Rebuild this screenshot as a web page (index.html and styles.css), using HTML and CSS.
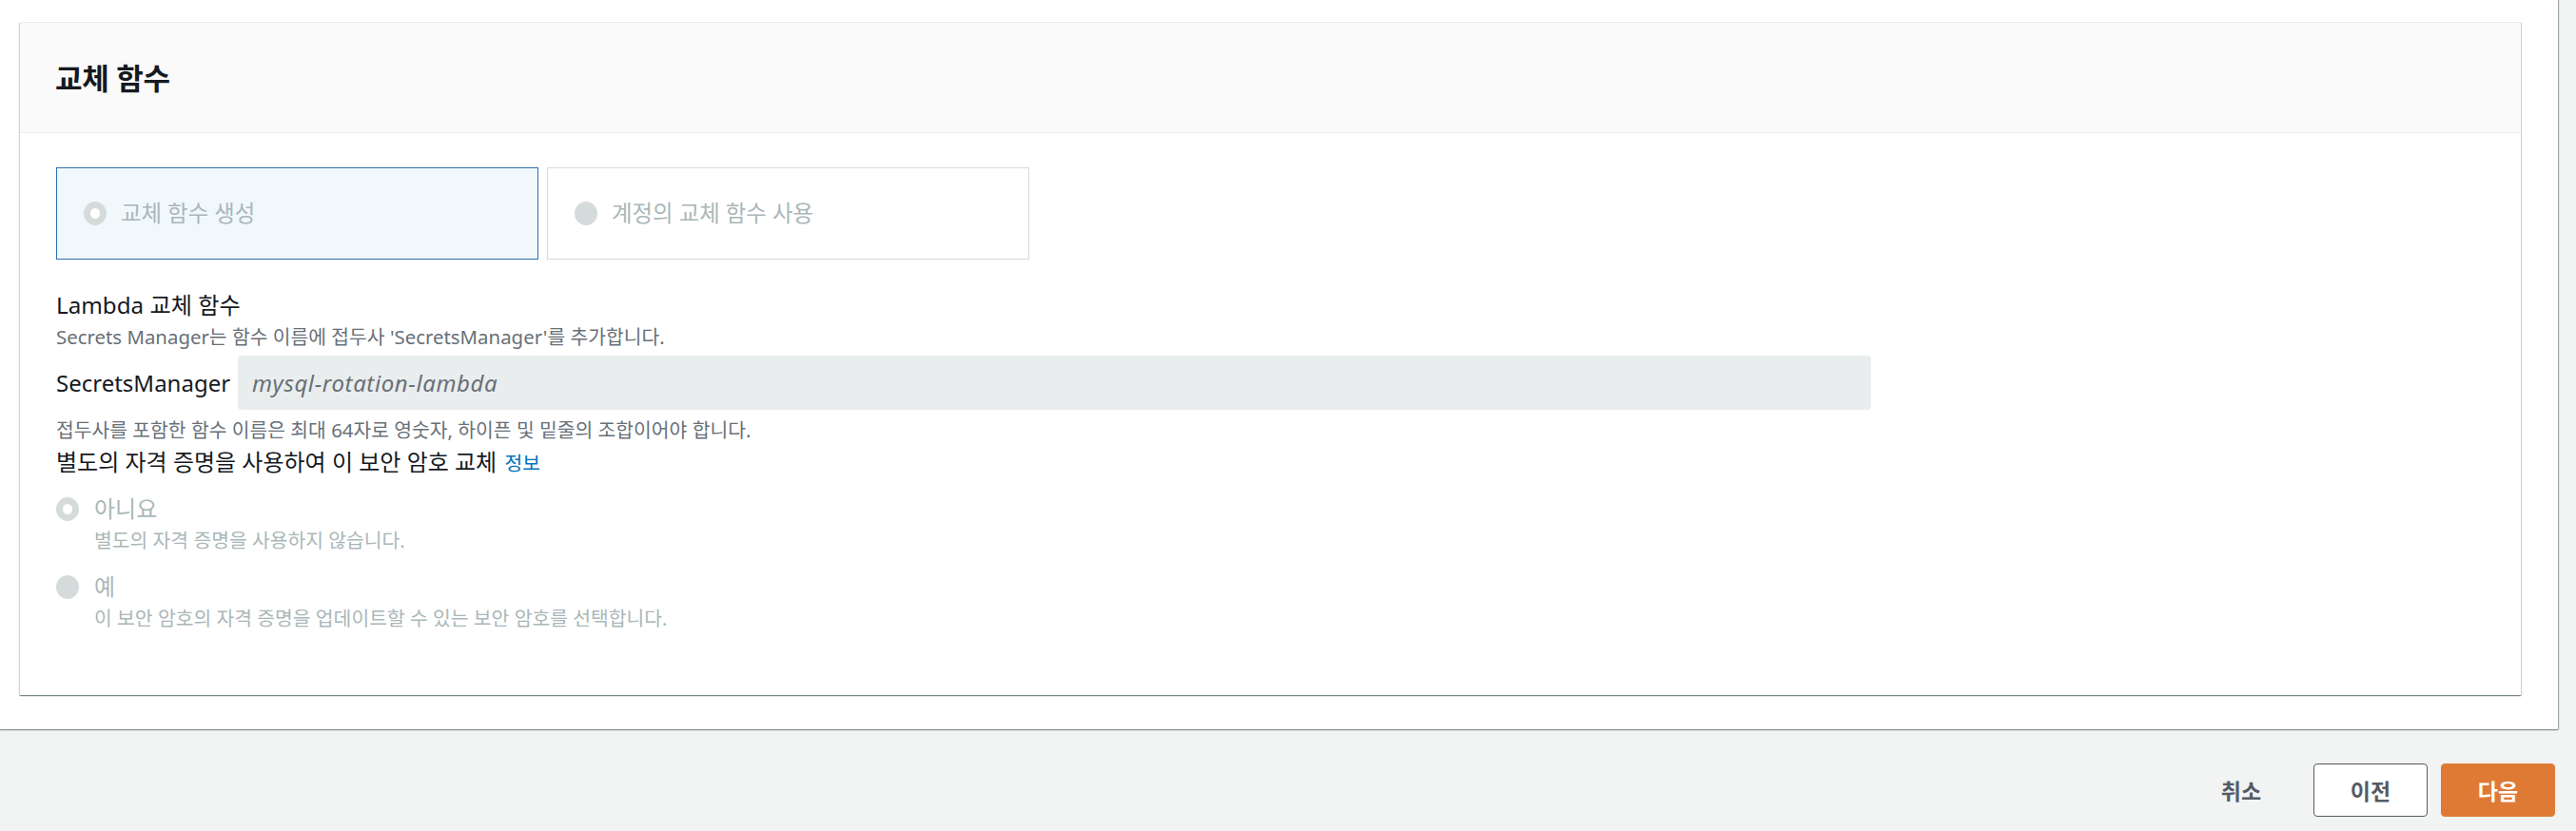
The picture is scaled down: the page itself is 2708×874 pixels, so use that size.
FILE: index.html
```html
<!DOCTYPE html>
<html lang="ko">
<head>
<meta charset="utf-8">
<title>교체 함수</title>
<link rel="stylesheet" href="styles.css">
</head>
<body>
<div class="main">
  <section class="card">
    <header class="card-header">
      <h2 class="card-title">교체 함수</h2>
    </header>
    <div class="card-body">
      <div class="tiles">
        <div class="tile tile-selected">
          <span class="radio radio-checked"></span>
          <span class="tile-label">교체 함수 생성</span>
        </div>
        <div class="tile">
          <span class="radio"></span>
          <span class="tile-label">계정의 교체 함수 사용</span>
        </div>
      </div>

      <div class="field-label">Lambda 교체 함수</div>
      <div class="field-desc">Secrets Manager는 함수 이름에 접두사 'SecretsManager'를 추가합니다.</div>
      <div class="input-row">
        <span class="prefix">SecretsManager</span>
        <div class="input"><span class="placeholder">mysql-rotation-lambda</span></div>
      </div>
      <div class="field-hint">접두사를 포함한 함수 이름은 최대 64자로 영숫자, 하이픈 및 밑줄의 조합이어야 합니다.</div>

      <div class="question">별도의 자격 증명을 사용하여 이 보안 암호 교체 <a class="info">정보</a></div>

      <div class="option first">
        <div class="option-row">
          <span class="radio radio-checked"></span>
          <span class="option-label">아니요</span>
        </div>
        <div class="option-desc">별도의 자격 증명을 사용하지 않습니다.</div>
      </div>
      <div class="option second">
        <div class="option-row">
          <span class="radio"></span>
          <span class="option-label">예</span>
        </div>
        <div class="option-desc">이 보안 암호의 자격 증명을 업데이트할 수 있는 보안 암호를 선택합니다.</div>
      </div>
    </div>
  </section>
</div>
<footer class="footer">
  <button class="btn btn-link">취소</button>
  <button class="btn btn-normal">이전</button>
  <button class="btn btn-primary">다음</button>
</footer>
</body>
</html>
```

FILE: styles.css
```css
* { box-sizing: border-box; }

html, body {
  margin: 0;
  padding: 0;
}

body {
  background: #f2f3f3;
  font-family: "Noto Sans", "Noto Sans CJK KR", sans-serif;
  color: #16191f;
  width: 2708px;
  height: 874px;
  overflow: hidden;
}

.main {
  width: 2689px;
  height: 767px;
  background: #ffffff;
  padding: 23px 39px 0 21px;
  box-shadow: 0 1px 1px 0 rgba(0, 28, 36, 0.45), 1px 0 1px 0 rgba(0, 28, 36, 0.3);
}

.card {
  background: #ffffff;
  border-top: 1px solid #eaeded;
  height: 708px;
  box-shadow: 0 1px 1px 0 rgba(0, 28, 36, 0.35), 1px 1px 1px 0 rgba(0, 28, 36, 0.15), -1px 1px 1px 0 rgba(0, 28, 36, 0.15);
}

.card-header {
  height: 116px;
  background: #fafafa;
  border-bottom: 1px solid #eaeded;
  display: flex;
  align-items: center;
  padding-left: 37px;
}

.card-title {
  margin: 0;
  font-size: 31px;
  font-weight: 700;
  line-height: 38px;
  color: #16191f;
  letter-spacing: -0.3px;
}

.card-body {
  padding: 36px 0 0 38px;
}

.tiles {
  display: flex;
  gap: 9px;
}

.tile {
  width: 507px;
  height: 97px;
  border: 1px solid #d5dbdb;
  background: #ffffff;
  display: flex;
  align-items: center;
  padding-left: 28px;
  gap: 15px;
}

.tile-selected {
  border-color: #2e6fb0;
  background: #f1f8fc;
}

.tile-label {
  font-size: 23.4px;
  color: #aab7b8;
  line-height: 30px;
  position: relative;
  top: -1px;
}

.radio {
  width: 24px;
  height: 25px;
  border-radius: 50%;
  background: #d5dbdb;
  flex: none;
  display: inline-block;
}

.radio-checked {
  background: #ffffff;
  border: 7px solid #d5dbdb;
}

.field-label {
  margin-top: 33px;
  font-size: 24.2px;
  line-height: 30px;
  color: #16191f;
}

.field-desc {
  margin-top: 4px;
  font-size: 20.4px;
  line-height: 28px;
  color: #687078;
}

.input-row {
  margin-top: 6px;
  display: flex;
  align-items: center;
  gap: 10px;
}

.prefix {
  font-size: 24px;
  color: #16191f;
  width: 181px;
  flex: none;
  white-space: nowrap;
}

.input {
  width: 1717px;
  height: 57px;
  background: #eaeded;
  border-radius: 4px;
  display: flex;
  align-items: center;
  padding-left: 15px;
}

.placeholder {
  font-size: 24px;
  font-style: italic;
  letter-spacing: 0.6px;
  color: #687078;
}

.field-hint {
  margin-top: 7px;
  font-size: 20.4px;
  line-height: 28px;
  color: #687078;
}

.question {
  margin-top: 5px;
  font-size: 24px;
  line-height: 30px;
  color: #16191f;
}

.info {
  font-size: 20.4px;
  color: #0073bb;
  margin-left: 2px;
}

.option.first { margin-top: 18px; }
.option.second { margin-top: 20px; }

.option-row {
  display: flex;
  align-items: center;
  gap: 16px;
  height: 30px;
}

.option-label {
  font-size: 24px;
  color: #aab7b8;
  line-height: 30px;
}

.option-desc {
  margin-top: 4px;
  padding-left: 40px;
  font-size: 20.4px;
  line-height: 28px;
  color: #aab7b8;
}

.footer {
  height: 107px;
  display: flex;
  justify-content: flex-end;
  align-items: flex-start;
  padding: 36px 22px 0 0;
  gap: 14px;
}

.btn {
  font-family: "Noto Sans", "Noto Sans CJK KR", sans-serif;
  font-size: 23px;
  font-weight: 700;
  width: 120px;
  height: 56px;
  border-radius: 4px;
  cursor: pointer;
  padding: 0;
}

.btn-link {
  background: transparent;
  border: none;
  color: #545b64;
  margin-right: 2px;
}

.btn-normal {
  background: #ffffff;
  border: 1px solid #545b64;
  color: #545b64;
}

.btn-primary {
  background: #df7a35;
  border: 1px solid #df7a35;
  color: #ffffff;
}
```
